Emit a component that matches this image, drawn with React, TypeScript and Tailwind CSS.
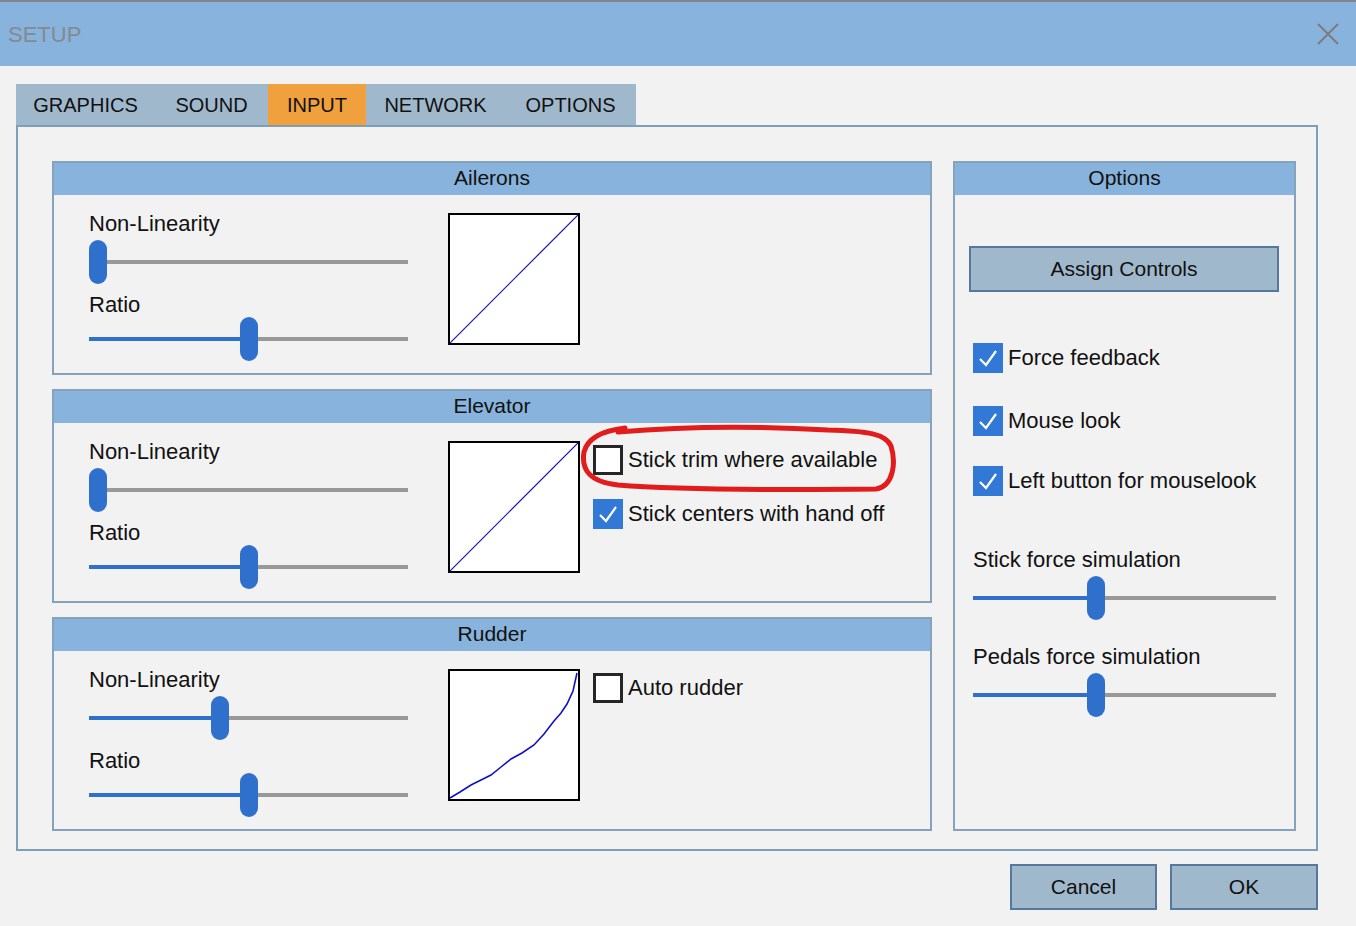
import React from "react";

type SliderProps = { value: number; width: number };

const Slider = ({ value, width }: SliderProps) => {
  const left = Math.round((width - 18) * value);
  return (
    <div className="relative h-[44px]" style={{ width }}>
      <div className="absolute left-0 right-0 top-[20px] h-[4px] bg-[#999999]" />
      <div className="absolute left-0 top-[20px] h-[4px] bg-[#2f70cc]" style={{ width: left + 9 }} />
      <div className="absolute top-0 h-[44px] w-[18px] rounded-[9px] bg-[#2f70cc]" style={{ left }} />
    </div>
  );
};

const Check = ({ checked, label }: { checked: boolean; label: string }) => (
  <div className="flex items-center gap-[5px]">
    {checked ? (
      <div className="w-[30px] h-[30px] bg-[#3278d6] flex items-center justify-center">
        <svg width="22" height="22" viewBox="0 0 22 22">
          <path d="M3 12 L9 18 L19 4" stroke="white" strokeWidth="2.2" fill="none" />
        </svg>
      </div>
    ) : (
      <div className="w-[30px] h-[30px] bg-white border-[3px] border-[#262626]" />
    )}
    <span className="text-[22px] leading-[24px] text-[#111]">{label}</span>
  </div>
);

const Graph = ({ curve }: { curve?: boolean }) => (
  <div className="w-[132px] h-[132px] border-2 border-black bg-white">
    <svg width="128" height="128" viewBox="0 0 128 128">
      {curve ? (
        <polyline
          points="0,127 10,121 21,114 31,109 41,104 51,96 61,88 72,82 84,74 94,63 104,50 111,42 117,33 123,20 127,2"
          stroke="#1010c8"
          strokeWidth="1.6"
          fill="none"
        />
      ) : (
        <line x1="0" y1="128" x2="128" y2="0" stroke="#1010c8" strokeWidth="1.2" />
      )}
    </svg>
  </div>
);

type GroupProps = { title: string; className?: string; children: React.ReactNode };

const Group = ({ title, className, children }: GroupProps) => (
  <div className={"flex flex-col border-2 border-[#86a3bd] " + (className ?? "")}>
    <div className="h-[32px] pb-[3px] bg-[#87b3dc] flex items-center justify-center text-[21px] text-[#111]">
      {title}
    </div>
    {children}
  </div>
);

type AxisProps = { title: string; nonLin: number; ratio: number; curve?: boolean; extra?: React.ReactNode };

const Axis = ({ title, nonLin, ratio, curve, extra }: AxisProps) => (
  <Group title={title} className="h-[214px]">
    <div className="flex pl-[35px]">
      <div className="flex flex-col w-[319px] pt-[17px]">
        <div className="text-[22px] leading-[24px] text-[#111]">Non-Linearity</div>
        <div className="mt-[4px]">
          <Slider value={nonLin} width={319} />
        </div>
        <div className="mt-[9px] text-[22px] leading-[24px] text-[#111]">Ratio</div>
        <Slider value={ratio} width={319} />
      </div>
      <div className="ml-[40px] pt-[18px]">
        <Graph curve={curve} />
      </div>
      <div className="ml-[13px] pt-[22px] flex flex-col gap-[24px]">{extra}</div>
    </div>
  </Group>
);

const Btn = ({ label, className }: { label: string; className: string }) => (
  <div
    className={
      "h-[46px] bg-[#a0b8cc] border-2 border-[#56789c] flex items-center justify-center text-[21px] text-[#111] " +
      className
    }
  >
    {label}
  </div>
);

export default function App() {
  return (
    <div className="relative w-[1356px] h-[926px] bg-[#f2f2f2] font-['Liberation_Sans',Arial,sans-serif] border-t-2 border-[#80848f]">
      <div className="h-[64px] bg-[#87b3dc] flex items-center justify-between pl-[8px] pr-[17px]">
        <span className="text-[22px] text-[#858a90]">SETUP</span>
        <svg width="22" height="22" viewBox="0 0 22 22">
          <path d="M1 1 L21 21 M21 1 L1 21" stroke="#7d7d7d" strokeWidth="2" />
        </svg>
      </div>

      <div className="pt-[18px] pl-[16px] pr-[38px]">
        <div className="flex h-[41px] w-[620px] bg-[#a0b8cc] text-[20px] text-[#111]">
          <div className="w-[139px] flex items-center justify-center">GRAPHICS</div>
          <div className="w-[113px] flex items-center justify-center">SOUND</div>
          <div className="w-[98px] flex items-center justify-center bg-[#f0a03c]">INPUT</div>
          <div className="w-[139px] flex items-center justify-center">NETWORK</div>
          <div className="w-[131px] flex items-center justify-center">OPTIONS</div>
        </div>

        <div className="h-[726px] border-2 border-[#7f9eb8] flex gap-[21px] pt-[34px] pl-[34px] pr-[20px] pb-[18px]">
          <div className="w-[880px] flex flex-col justify-between">
            <Axis title="Ailerons" nonLin={0} ratio={0.5} />
            <Axis
              title="Elevator"
              nonLin={0}
              ratio={0.5}
              extra={
                <>
                  <Check checked={false} label="Stick trim where available" />
                  <Check checked label="Stick centers with hand off" />
                </>
              }
            />
            <Axis title="Rudder" nonLin={0.405} ratio={0.5} curve extra={<Check checked={false} label="Auto rudder" />} />
          </div>

          <Group title="Options" className="flex-1">
            <div className="flex flex-col pl-[14px] pr-[15px] pt-[51px]">
              <Btn label="Assign Controls" className="w-[310px]" />
              <div className="pl-[4px] pt-[51px] flex flex-col">
                <Check checked label="Force feedback" />
                <div className="mt-[33px]">
                  <Check checked label="Mouse look" />
                </div>
                <div className="mt-[30px]">
                  <Check checked label="Left button for mouselook" />
                </div>
                <div className="mt-[52px] text-[22px] leading-[24px] text-[#111]">Stick force simulation</div>
                <div className="mt-[4px]">
                  <Slider value={0.4} width={303} />
                </div>
                <div className="mt-[25px] text-[22px] leading-[24px] text-[#111]">Pedals force simulation</div>
                <div className="mt-[4px]">
                  <Slider value={0.4} width={303} />
                </div>
              </div>
            </div>
          </Group>
        </div>

        <div className="flex justify-end gap-[13px] mt-[13px]">
          <Btn label="Cancel" className="w-[147px]" />
          <Btn label="OK" className="w-[148px]" />
        </div>
      </div>

      <svg className="absolute left-[578px] top-[420px]" width="324" height="76" viewBox="0 0 324 76">
        <path
          d="M47 6 C30 8 10 14 6 30 C3 48 12 60 40 63 C100 68 200 68 298 67 C316 64 318 40 313 24 C308 12 290 9 250 8 C180 4 110 4 40 10"
          stroke="#e21c1c"
          strokeWidth="5"
          fill="none"
          strokeLinecap="round"
        />
      </svg>
    </div>
  );
}
